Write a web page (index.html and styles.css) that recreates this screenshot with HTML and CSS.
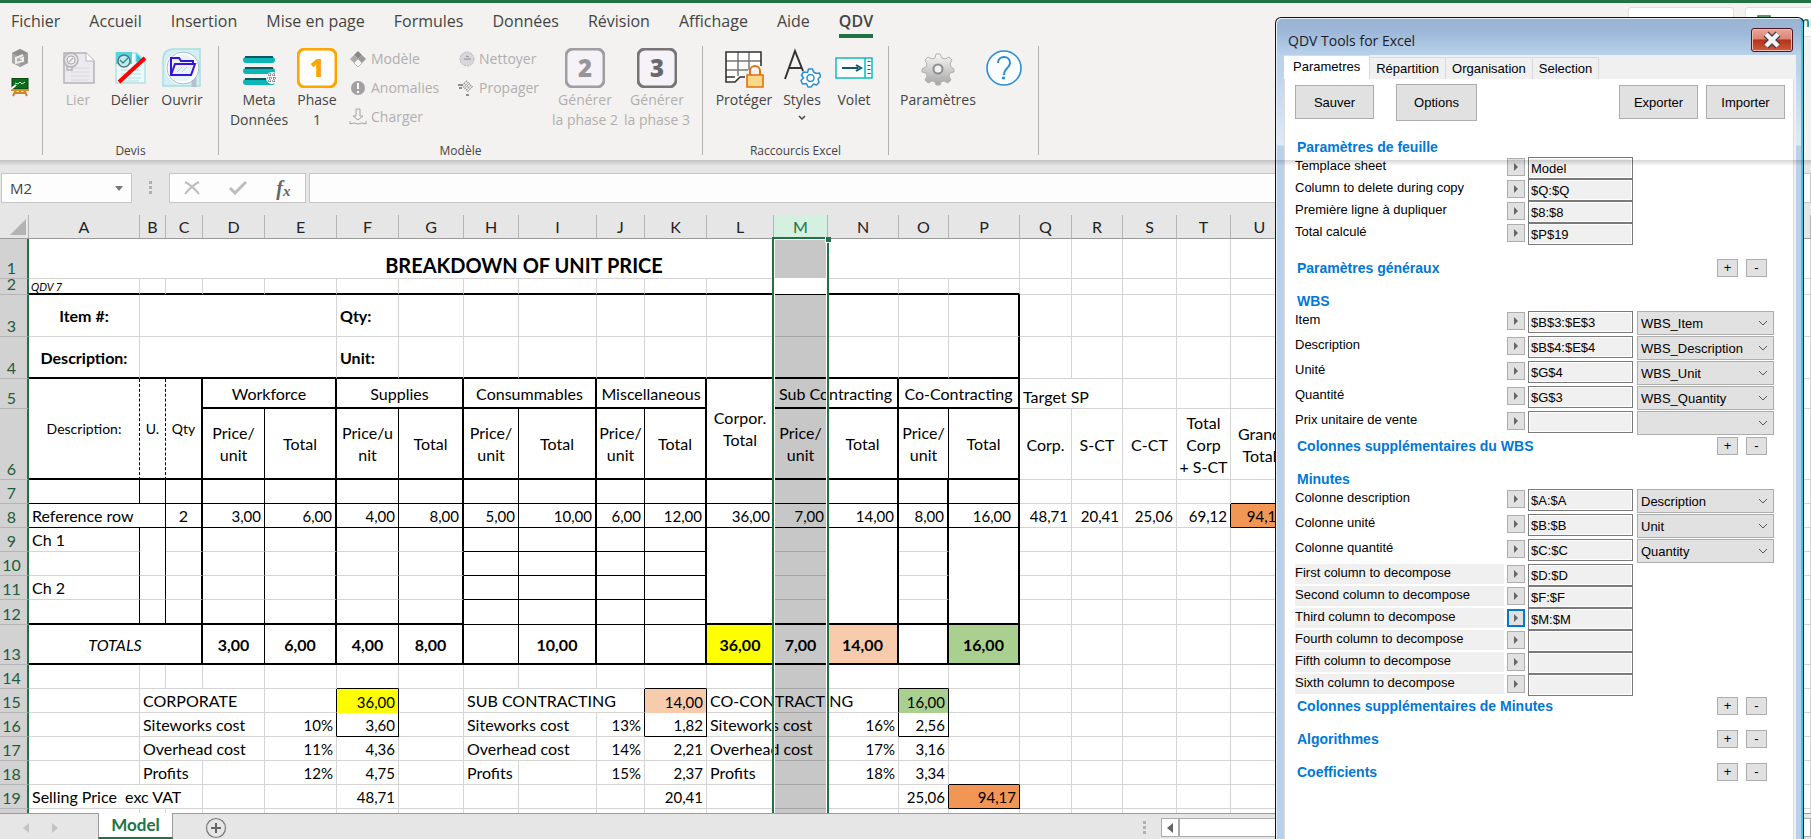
FILE: index.html
```html
<!DOCTYPE html>
<html lang="fr">
<head>
<meta charset="utf-8">
<title>QDV - Model</title>
<link rel="stylesheet" href="styles.css">
</head>
<body>
<header class="ribbon">
  <nav class="tabs">
    <a href="#">Fichier</a>
    <a href="#">Accueil</a>
    <a href="#">Insertion</a>
    <a href="#">Mise en page</a>
    <a href="#">Formules</a>
    <a href="#">Données</a>
    <a href="#">Révision</a>
    <a href="#">Affichage</a>
    <a href="#">Aide</a>
    <a href="#" class="current">QDV</a>
    <div class="share">
      <button class="share-btn"><svg width="14" height="14" viewBox="0 0 14 14"><path d="M2 12V7h6M8 3l4 4-4 4" fill="none" stroke="#217346" stroke-width="1.5"/></svg>Partager</button>
      <button class="share-btn"><svg width="14" height="14" viewBox="0 0 14 14"><path d="M1 1h12v9H6l-3 3v-3H1z" fill="none" stroke="#217346" stroke-width="1.5"/></svg>Commentaires</button>
    </div>
  </nav>
  <div class="groups">
    <section class="group quick">
      <button class="mini" aria-label="Objet"><svg width="18" height="18" viewBox="0 0 18 18"><path d="M9 0l8 4v10l-8 4-8-4V4z" fill="#a9a9a9"/><path d="M9 0l8 4-8 4-8-4z" fill="#8f8f8f"/><path d="M9 8l8-4v10l-8 4z" fill="#9a9a9a"/><path d="M12 6l-7 3v5l7-2V9l-3 1" fill="none" stroke="#eee" stroke-width="2"/></svg></button>
      <button class="mini" aria-label="Tableau"><svg width="18" height="19" viewBox="0 0 18 19"><path d="M5 12l-3 6M13 12l3 6M9 12v4M4 15h10" stroke="#d2822a" stroke-width="2"/><path d="M1 0h16v11H1z" fill="#0b6b1c" stroke="#06390f"/><path d="M4 5l3 1 2-2 2 2 3-2" stroke="#cfe8cf" fill="none"/><path d="M0 12h18" stroke="#e08a25" stroke-width="2"/><path d="M0 11l5-4" stroke="#fff" stroke-width="2"/></svg></button>
    </section>
    <section class="group devis">
      <div class="tools">
        <button class="tool off"><svg width="36" height="40" viewBox="0 0 36 40"><path d="M4 5h22l8 8v22H4z" fill="#eceaee" stroke="#b5b3b8" stroke-width="1.5"/><path d="M26 5v8h8" fill="#fff" stroke="#b5b3b8"/><path d="M11 20h18M11 24h18M11 28h18M11 32h16" stroke="#d8d6dc"/><circle cx="11" cy="12" r="7" fill="#e4e2e6" stroke="#b5b3b8" stroke-width="1.5"/><circle cx="11" cy="12" r="4" fill="#f5f4f6" stroke="#aaa8ac"/><path d="M9 14l4-4M7 18v4h5v-4" fill="none" stroke="#b5b3b8" stroke-width="1.5"/></svg><span>Lier</span></button>
        <button class="tool"><svg width="36" height="40" viewBox="0 0 36 40"><path d="M4 5h21l8 8v22H4z" fill="#e9fbfc" stroke="#b6dfe3" stroke-width="1.5"/><path d="M4 4h16v12H4z" fill="#59d3dc"/><path d="M24 5v9h9" fill="#35c9d8" stroke="#7fdce4"/><path d="M9 22h20M9 26h20M9 30h20M9 33h18" stroke="#b5dfe4"/><circle cx="12" cy="13" r="6" fill="#bfeef2" stroke="#54767c" stroke-width="1.5"/><path d="M8 12l3 3 5-5" fill="none" stroke="#3b8791" stroke-width="1.5"/><path d="M7 34L33 10" stroke="#f00" stroke-width="4"/></svg><span>Délier</span></button>
        <button class="tool"><svg width="40" height="40" viewBox="0 0 40 40"><path d="M1 12Q1 1 12 1h26v37H1z" fill="#d3eff1" stroke="#a9dde0" stroke-width="1.5"/><path d="M32 28v11" stroke="#b3c2cc" stroke-width="5"/><circle cx="20" cy="20" r="15" fill="#e6f4f7" stroke="#fff" stroke-width="3"/><circle cx="21" cy="20" r="16" fill="none" stroke="#a3bcc6"/><path d="M9 27V10h8l2 3h12v4M9 27l4-11h20l-4 11z" fill="none" stroke="#3a12e0" stroke-width="2"/><path d="M15 24l5-5M20 24l5-5" stroke="#b9cad4"/></svg><span>Ouvrir</span></button>
      </div>
      <h2>Devis</h2>
    </section>
    <section class="group modele">
      <div class="tools">
        <button class="tool meta"><svg width="36" height="40" viewBox="0 0 36 40"><g stroke-linecap="round" stroke-width="6" stroke="#0cb5b9"><path d="M5 12h26M5 23h26M5 34h26"/></g><path d="M4 9h28M4 20h28M4 31h28" stroke="#0b5a5c" stroke-width="2"/><circle cx="31" cy="30" r="6" fill="#fff"/><path d="M27 27h8M26 30h10M27 33h8M29 25v10M33 25v10" stroke="#444" stroke-dasharray="1 1"/></svg><span>Meta<br>Données</span></button>
        <button class="tool phase"><svg width="40" height="40" viewBox="0 0 40 40"><rect x="1" y="1" width="38" height="38" rx="7" fill="#fdfdfd" stroke="#ffa500" stroke-width="3"/><text x="20" y="29" class="num" fill="#ffa500">1</text></svg><span>Phase<br>1</span></button>
        <div class="small-tools first">
          <button><svg width="18" height="18" viewBox="0 0 18 18"><path d="M9 1l4 4-4 4-4-4z" fill="#888"/><path d="M5 5l4 4-4 4-4-4z" fill="#aaa"/><path d="M13 5l4 4-4 4-4-4z" fill="#999"/><path d="M9 9l4 4-4 4-4-4z" fill="#fafafa" stroke="#bbb"/></svg>Modèle</button>
          <button><svg width="18" height="18" viewBox="0 0 18 18"><circle cx="9" cy="9" r="7" fill="#a2a0a2"/><path d="M9 4v6M9 12v2" stroke="#fff" stroke-width="2"/></svg>Anomalies</button>
          <button><svg width="18" height="18" viewBox="0 0 18 18"><path d="M7 1h4v7h3l-5 4-5-4h3zM1 13v3l4-1 4 1 4-1 4 1v-3" fill="none" stroke="#a6a4a6"/></svg>Charger</button>
        </div>
        <div class="small-tools second">
          <button><svg width="18" height="18" viewBox="0 0 18 18"><circle cx="10" cy="9" r="7" fill="#d9d5dc" stroke="#b9b5bc" stroke-dasharray="2 1"/><path d="M7 9h7M9 6l3 1" stroke="#8f8c92"/></svg>Nettoyer</button>
          <button><svg width="18" height="18" viewBox="0 0 18 18"><g fill="none" stroke="#8f8d8f" stroke-width="2" stroke-dasharray="1 1"><path d="M9 2l7 7M7 4l7 7M5 6l7 7"/></g><path d="M1 6h5M2 9h3M9 16h3" stroke="#8f8d8f" stroke-width="2"/></svg>Propager</button>
        </div>
        <button class="tool gen off"><svg width="40" height="40" viewBox="0 0 40 40"><rect x="1" y="1" width="38" height="38" rx="7" fill="#f5f2f8" stroke="#a09ea1" stroke-width="3"/><text x="20" y="29" class="num" fill="#979598">2</text></svg><span>Générer<br>la phase 2</span></button>
        <button class="tool gen off"><svg width="40" height="40" viewBox="0 0 40 40"><rect x="1" y="1" width="38" height="38" rx="7" fill="#f5f2f8" stroke="#777578" stroke-width="3"/><text x="20" y="29" class="num" fill="#6b696c">3</text></svg><span>Générer<br>la phase 3</span></button>
      </div>
      <h2>Modèle</h2>
    </section>
    <section class="group excel">
      <div class="tools">
        <button class="tool wide"><svg width="40" height="40" viewBox="0 0 40 40"><path d="M2 4h35v18H22l-8 8-4 4H2z" fill="#fff"/><path d="M2 13h35M2 22h22M14 4v24M25 4v18" stroke="#777" stroke-width="1.5"/><path d="M37 18V4H2v30h9l5-5h5M2 29h9" fill="none" stroke="#333" stroke-width="1.6"/><path d="M26 27v-4a5 5 0 0 1 10 0v4" fill="none" stroke="#e0720c" stroke-width="2"/><path d="M23 27h16v12H23z" fill="#fad88a" stroke="#e0720c" stroke-width="1.6"/></svg><span>Protéger</span></button>
        <button class="tool"><svg width="38" height="40" viewBox="0 0 38 40"><path d="M2 31L12 3l8 20M6 20h13" fill="none" stroke="#333" stroke-width="2"/><path d="M25.500 21h4l1 3 3 1.500 3-.5 1 3.500-2.500 2.500 1 3.500-2.500 2.500-3-1-2.500 3h-3l-1.500-3.500-4 .5-1.500-3.500 2.500-2.500-2-3 2-3 4 .5z" fill="#fff" stroke="#2a8dd4" stroke-width="1.500" stroke-linejoin="round"/><circle cx="27.500" cy="30" r="3.500" fill="#fff" stroke="#2a8dd4" stroke-width="1.500"/></svg><span>Styles</span><svg width="10" height="16" viewBox="0 0 10 16"><path d="M2 6l3 3 3-3" fill="none" stroke="#444" stroke-width="1.5"/></svg></button>
        <button class="tool"><svg width="38" height="40" viewBox="0 0 38 40"><path d="M1 10h36v20H1zM30 10v20" fill="#fbfdfd" stroke="#12bcbc" stroke-width="1.5"/><path d="M7 20h16M21 17l5 3-5 3" fill="none" stroke="#12586a" stroke-width="2"/><path d="M34 13v14" stroke="#12586a" stroke-width="3" stroke-dasharray="1 3"/></svg><span>Volet</span></button>
      </div>
      <h2>Raccourcis Excel</h2>
    </section>
    <section class="group last">
      <div class="tools">
        <button class="tool params"><svg width="34" height="40" viewBox="0 0 34 40"><defs><linearGradient id="steel" x2="0" y2="1"><stop stop-color="#f8f8f8"/><stop offset="1" stop-color="#a5a5a5"/></linearGradient></defs><path d="M15 6h4l2 4 3 1 4-2 3 3-2 4 1 3 3 2v3l-4 1-1 3 2 4-3 3-4-2-3 1-1 3h-4l-1-3-3-1-4 2-3-3 2-4-1-3-4-1v-3l4-2 1-3-2-4 3-3 4 2 3-1z" fill="url(#steel)" stroke="#b0b0b0"/><circle cx="17" cy="21" r="4.500" fill="#f3f2f1" stroke="#8d8d8d" stroke-width="2"/></svg><span>Paramètres</span></button>
        <button class="tool" aria-label="Aide QDV"><svg width="38" height="40" viewBox="0 0 38 40"><circle cx="19" cy="20" r="17" fill="#fafcfe" stroke="#2a8dd4" stroke-width="1.6"/><path d="M13 15c0-8 12-8 12 0 0 5-6 5-6 12" fill="none" stroke="#2a8dd4" stroke-width="2"/><path d="M17 30h3" stroke="#2a8dd4" stroke-width="2.500"/></svg></button>
      </div>
    </section>
  </div>
</header>

<div class="formula-bar">
  <label class="name-box"><input type="text" value="M2" aria-label="Zone Nom"><svg width="8" height="5" viewBox="0 0 8 5"><path d="M0 0h8L4 5z" fill="#777"/></svg></label>
  <span class="grip"></span>
  <div class="fx">
    <button aria-label="Annuler"><svg width="16" height="14" viewBox="0 0 16 14"><path d="M1 1c6 3 10 7 14 12M15 1C9 4 5 8 1 13" fill="none" stroke="#bdbdbd" stroke-width="2"/></svg></button>
    <button aria-label="Valider"><svg width="18" height="14" viewBox="0 0 18 14"><path d="M1 7l5 5L17 1" fill="none" stroke="#bdbdbd" stroke-width="3"/></svg></button>
    <button class="fn">f<sub>x</sub></button>
  </div>
  <input class="formula" type="text" aria-label="Barre de formule">
</div>

<main class="sheet">
<table>
<colgroup><col class="w29"><col class="w111"><col class="w26"><col class="w37"><col class="w62"><col class="w72"><col class="w62"><col class="w65"><col class="w55"><col class="w78"><col class="w48"><col class="w62"><col class="w67"><col class="w54"><col class="w71"><col class="w50"><col class="w71"><col class="w52"><col class="w51"><col class="w54"><col class="w54"><col class="w58"><col></colgroup>
<thead>
<tr><th class="corner"><svg width="16" height="16" viewBox="0 0 16 16"><path d="M16 0v16H0z" fill="#b4b4b4"/></svg></th><th>A</th><th>B</th><th>C</th><th>D</th><th>E</th><th>F</th><th>G</th><th>H</th><th>I</th><th>J</th><th>K</th><th>L</th><th class="picked">M<div class="selection"><div class="shade above"></div><div class="active"></div><div class="shade below"></div><b class="handle"></b></div></th><th>N</th><th>O</th><th>P</th><th>Q</th><th>R</th><th>S</th><th>T</th><th>U</th><th></th></tr>
</thead>
<tbody>
<tr class="h40"><th>1</th><td colspan="16" class="title">BREAKDOWN OF UNIT PRICE</td><td></td><td></td><td></td><td></td><td></td><td></td></tr>
<tr class="h16"><th><span>2</span></th><td class="B2 note">QDV 7</td><td class="B2"></td><td class="B2"></td><td class="B2"></td><td class="B2"></td><td class="B2"></td><td class="B2"></td><td class="B2"></td><td class="B2"></td><td class="B2"></td><td class="B2"></td><td class="B2"></td><td class="B2"></td><td class="B2"></td><td class="B2"></td><td class="B2"></td><td></td><td></td><td></td><td></td><td></td><td></td></tr>
<tr class="h42"><th>3</th><td class="c b">Item #:</td><td colspan="4"></td><td class="b">Qty:</td><td></td><td></td><td></td><td></td><td></td><td></td><td></td><td></td><td></td><td class="R2"></td><td></td><td></td><td></td><td></td><td></td><td></td></tr>
<tr class="h42"><th>4</th><td class="c b B2">Description:</td><td colspan="4" class="B2"></td><td class="b B2">Unit:</td><td class="B2"></td><td class="B2"></td><td class="B2"></td><td class="B2"></td><td class="B2"></td><td class="B2"></td><td class="B2"></td><td class="B2"></td><td class="B2"></td><td class="B2 R2"></td><td></td><td></td><td></td><td></td><td></td><td></td></tr>
<tr class="h30"><th>5</th><td rowspan="2" class="c s RD B2">Description:</td><td rowspan="2" class="c s RD B2">U.</td><td rowspan="2" class="c s R2 B2">Qty</td><td colspan="2" class="c R2 B2">Workforce</td><td colspan="2" class="c R2 B2">Supplies</td><td colspan="2" class="c R2 B2">Consummables</td><td colspan="2" class="c R2 B2">Miscellaneous</td><td rowspan="2" class="c B2">Corpor.<br>Total</td><td colspan="2" class="c R2 B2">Sub Contracting</td><td colspan="2" class="c R2 B2">Co-Contracting</td><td colspan="2" class="low">Target SP</td><td></td><td></td><td></td><td></td></tr>
<tr class="h71"><th>6</th><td class="c R1 B2">Price/<br>unit</td><td class="c R2 B2">Total</td><td class="c R1 B2">Price/u<br>nit</td><td class="c R2 B2">Total</td><td class="c R1 B2">Price/<br>unit</td><td class="c R2 B2">Total</td><td class="c R1 B2">Price/<br>unit</td><td class="c R2 B2">Total</td><td class="c B2">Price/<br>unit</td><td class="c R2 B2">Total</td><td class="c R1 B2">Price/<br>unit</td><td class="c R2 B2">Total</td><td class="c">Corp.</td><td class="c">S-CT</td><td class="c">C-CT</td><td class="c">Total<br>Corp<br>+ S-CT</td><td class="c">Grand<br>Total</td><td></td></tr>
<tr class="h24"><th>7</th><td class="R1 B1"></td><td class="R1 B1"></td><td class="R2 B1"></td><td class="R1 B1"></td><td class="R2 B1"></td><td class="R1 B1"></td><td class="R2 B1"></td><td class="R1 B1"></td><td class="R2 B1"></td><td class="R1 B1"></td><td class="R2 B1"></td><td class="B1"></td><td class="B1"></td><td class="R2 B1"></td><td class="R2 B1"></td><td class="R2 B1"></td><td></td><td></td><td></td><td></td><td class="B1"></td><td></td></tr>
<tr class="h24"><th>8</th><td colspan="2" class="R1 B1">Reference row</td><td class="c R2 B1">2</td><td class="r R1 B1">3,00</td><td class="r R2 B1">6,00</td><td class="r R1 B1">4,00</td><td class="r R2 B1">8,00</td><td class="r R1 B1">5,00</td><td class="r R2 B1">10,00</td><td class="r R1 B1">6,00</td><td class="r R2 B1">12,00</td><td class="r B1">36,00</td><td class="r B1">7,00</td><td class="r R2 B1">14,00</td><td class="r R2 B1">8,00</td><td class="r indent R2 B1">16,00</td><td class="r">48,71</td><td class="r">20,41</td><td class="r">25,06</td><td class="r R1">69,12</td><td class="r R1 B1 orange">94,17</td><td></td></tr>
<tr class="h24"><th>9</th><td class="R1">Ch 1</td><td class="R1 B0"></td><td class="R2"></td><td class="R1"></td><td class="R2"></td><td class="R1"></td><td class="R2"></td><td class="R1 B1"></td><td class="R2 B1"></td><td class="R1 B1"></td><td class="R2 B1"></td><td rowspan="4" class="B2"></td><td></td><td rowspan="4" class="R2 B2"></td><td class="R2"></td><td rowspan="4" class="R2 B2"></td><td></td><td></td><td></td><td></td><td></td><td></td></tr>
<tr class="h24"><th>10</th><td class="R1"></td><td class="R1"></td><td class="R2"></td><td class="R1"></td><td class="R2"></td><td class="R1"></td><td class="R2"></td><td class="R1 B1"></td><td class="R2 B1"></td><td class="R1 B1"></td><td class="R2 B1"></td><td></td><td class="R2"></td><td></td><td></td><td></td><td></td><td></td><td></td></tr>
<tr class="h24"><th>11</th><td class="R1">Ch 2</td><td class="R1"></td><td class="R2"></td><td class="R1"></td><td class="R2"></td><td class="R1"></td><td class="R2"></td><td class="R1 B1"></td><td class="R2 B1"></td><td class="R1 B1"></td><td class="R2 B1"></td><td></td><td class="R2"></td><td></td><td></td><td></td><td></td><td></td><td></td></tr>
<tr class="h25"><th>12</th><td class="R1 B2"></td><td class="R1 B2"></td><td class="R2 B2"></td><td class="R1 B2"></td><td class="R2 B2"></td><td class="R1 B2"></td><td class="R2 B2"></td><td class="R1 B1"></td><td class="R2 B1"></td><td class="R1 B1"></td><td class="R2 B1"></td><td class="B2"></td><td class="R2 B2"></td><td></td><td></td><td></td><td></td><td></td><td></td></tr>
<tr class="h40"><th>13</th><td colspan="3" class="c i R2 B2">TOTALS</td><td class="c b R1 B2">3,00</td><td class="c b R2 B2">6,00</td><td class="c b R1 B2">4,00</td><td class="c b R2 B2">8,00</td><td class="R1 B2"></td><td class="c b R2 B2">10,00</td><td class="R1 B2"></td><td class="R2 B2"></td><td class="c b B2 yellow">36,00</td><td class="c b B2">7,00</td><td class="c b R2 B2 peach">14,00</td><td class="R2 B2"></td><td class="c b R2 B2 green">16,00</td><td></td><td></td><td></td><td></td><td></td><td></td></tr>
<tr class="h24"><th>14</th><td></td><td></td><td></td><td></td><td></td><td class="B1"></td><td></td><td></td><td></td><td></td><td class="B1"></td><td></td><td></td><td></td><td class="B1"></td><td></td><td></td><td></td><td></td><td></td><td></td><td></td></tr>
<tr class="h24"><th>15</th><td></td><td colspan="3">CORPORATE</td><td class="R1"></td><td class="r R1 B0 yellow">36,00</td><td></td><td colspan="3" class="R1">SUB CONTRACTING</td><td class="r R1 B0 peach">14,00</td><td colspan="3" class="R1">CO-CONTRACTING</td><td class="r R1 B0 green">16,00</td><td></td><td></td><td></td><td></td><td></td><td></td><td></td></tr>
<tr class="h24"><th>16</th><td></td><td colspan="3">Siteworks cost</td><td class="r R1">10%</td><td class="r R1 B1">3,60</td><td></td><td colspan="2">Siteworks cost</td><td class="r R1">13%</td><td class="r R1 B1">1,82</td><td colspan="2">Siteworks cost</td><td class="r R1">16%</td><td class="r R1 B1">2,56</td><td></td><td></td><td></td><td></td><td></td><td></td><td></td></tr>
<tr class="h24"><th>17</th><td></td><td colspan="3">Overhead cost</td><td class="r">11%</td><td class="r">4,36</td><td></td><td colspan="2">Overhead cost</td><td class="r">14%</td><td class="r">2,21</td><td colspan="2">Overhead cost</td><td class="r">17%</td><td class="r">3,16</td><td></td><td></td><td></td><td></td><td></td><td></td><td></td></tr>
<tr class="h24"><th>18</th><td></td><td colspan="2">Profits</td><td></td><td class="r">12%</td><td class="r">4,75</td><td></td><td>Profits</td><td></td><td class="r">15%</td><td class="r">2,37</td><td>Profits</td><td></td><td class="r">18%</td><td class="r">3,34</td><td class="B1"></td><td></td><td></td><td></td><td></td><td></td><td></td></tr>
<tr class="h24"><th>19</th><td colspan="3">Selling Price&nbsp; exc VAT</td><td></td><td></td><td class="r">48,71</td><td></td><td></td><td></td><td></td><td class="r">20,41</td><td></td><td></td><td></td><td class="r R1">25,06</td><td class="r R1 B1 orange">94,17</td><td></td><td></td><td></td><td></td><td></td><td></td></tr>
<tr class="h24"><th></th><td></td><td></td><td></td><td></td><td></td><td></td><td></td><td></td><td></td><td></td><td></td><td></td><td></td><td></td><td></td><td></td><td></td><td></td><td></td><td></td><td></td><td></td></tr>
</tbody>
</table>
</main>

<footer class="sheet-tabs">
  <div class="nav"><svg width="6" height="10" viewBox="0 0 6 10"><path d="M6 0v10L0 5z" fill="#c3c3c3"/></svg><svg width="6" height="10" viewBox="0 0 6 10"><path d="M0 0v10l6-5z" fill="#c3c3c3"/></svg></div>
  <button class="sheet-tab">Model</button>
  <button class="add" aria-label="Nouvelle feuille"><svg width="22" height="22" viewBox="0 0 22 22"><circle cx="11" cy="11" r="9.500" fill="none" stroke="#777" stroke-width="1.2"/><path d="M11 6v10M6 11h10" stroke="#666" stroke-width="2"/></svg></button>
  <span class="grip"></span>
  <div class="scroll"><button aria-label="Défiler"><svg width="6" height="10" viewBox="0 0 6 10"><path d="M6 0v10L0 5z" fill="#666"/></svg></button><div class="track"></div></div>
</footer>

<aside class="dialog">
  <div class="titlebar"><h1>QDV Tools for Excel</h1><button class="close" aria-label="Fermer"><svg width="20" height="18" viewBox="0 0 20 18"><path d="M4 3l12 12M16 3L4 15" stroke="#4a3a44" stroke-width="7"/><path d="M4 3l12 12M16 3L4 15" stroke="#f4f4f4" stroke-width="4.500"/></svg></button></div>
  <div class="body">
    <div class="dlg-tabs"><button class="on">Parametres</button><button>Répartition</button><button>Organisation</button><button>Selection</button></div>
    <div class="panel">
      <div class="actions"><button>Sauver</button><button class="big">Options</button><button class="push">Exporter</button><button>Importer</button></div>
      <div class="head"><h3>Paramètres de feuille</h3></div>
      <div class="row"><label for="p1">Templace sheet</label><button class="pick" aria-label="Choisir"></button><input id="p1" value="Model"></div>
      <div class="row"><label for="p2">Column to delete during copy</label><button class="pick" aria-label="Choisir"></button><input id="p2" value="$Q:$Q"></div>
      <div class="row"><label for="p3">Première ligne à dupliquer</label><button class="pick" aria-label="Choisir"></button><input id="p3" value="$8:$8"></div>
      <div class="row"><label for="p4">Total calculé</label><button class="pick" aria-label="Choisir"></button><input id="p4" value="$P$19"></div>
      <div class="head"><h3>Paramètres généraux</h3><button>+</button><button>-</button></div>
      <div class="head"><h3>WBS</h3></div>
      <div class="row tall"><label for="w1">Item</label><button class="pick" aria-label="Choisir"></button><input id="w1" value="$B$3:$E$3"><select aria-label="Champ Item"><option>WBS_Item</option></select></div>
      <div class="row tall"><label for="w2">Description</label><button class="pick" aria-label="Choisir"></button><input id="w2" value="$B$4:$E$4"><select aria-label="Champ Description"><option>WBS_Description</option></select></div>
      <div class="row tall"><label for="w3">Unité</label><button class="pick" aria-label="Choisir"></button><input id="w3" value="$G$4"><select aria-label="Champ Unité"><option>WBS_Unit</option></select></div>
      <div class="row tall"><label for="w4">Quantité</label><button class="pick" aria-label="Choisir"></button><input id="w4" value="$G$3"><select aria-label="Champ Quantité"><option>WBS_Quantity</option></select></div>
      <div class="row tall"><label for="w5">Prix unitaire de vente</label><button class="pick" aria-label="Choisir"></button><input id="w5" value=""><select aria-label="Champ Prix"><option></option></select></div>
      <div class="head tight"><h3>Colonnes supplémentaires du WBS</h3><button>+</button><button>-</button></div>
      <div class="head"><h3>Minutes</h3></div>
      <div class="row tall"><label for="m1">Colonne description</label><button class="pick" aria-label="Choisir"></button><input id="m1" value="$A:$A"><select aria-label="Champ description"><option>Description</option></select></div>
      <div class="row tall"><label for="m2">Colonne unité</label><button class="pick" aria-label="Choisir"></button><input id="m2" value="$B:$B"><select aria-label="Champ unité"><option>Unit</option></select></div>
      <div class="row tall"><label for="m3">Colonne quantité</label><button class="pick" aria-label="Choisir"></button><input id="m3" value="$C:$C"><select aria-label="Champ quantité"><option>Quantity</option></select></div>
      <div class="row fill"><label for="d1">First column to decompose</label><button class="pick" aria-label="Choisir"></button><input id="d1" value="$D:$D"></div>
      <div class="row fill"><label for="d2">Second column to decompose</label><button class="pick" aria-label="Choisir"></button><input id="d2" value="$F:$F"></div>
      <div class="row fill"><label for="d3">Third column to decompose</label><button class="pick focus" aria-label="Choisir"></button><input id="d3" value="$M:$M"></div>
      <div class="row fill"><label for="d4">Fourth column to decompose</label><button class="pick" aria-label="Choisir"></button><input id="d4" value=""></div>
      <div class="row fill"><label for="d5">Fifth column to decompose</label><button class="pick" aria-label="Choisir"></button><input id="d5" value=""></div>
      <div class="row fill"><label for="d6">Sixth column to decompose</label><button class="pick" aria-label="Choisir"></button><input id="d6" value=""></div>
      <div class="head tight"><h3>Colonnes supplémentaires de Minutes</h3><button>+</button><button>-</button></div>
      <div class="head"><h3>Algorithmes</h3><button>+</button><button>-</button></div>
      <div class="head"><h3>Coefficients</h3><button>+</button><button>-</button></div>
    </div>
  </div>
</aside>
</body>
</html>
```
FILE: styles.css
```css
* { box-sizing: border-box; }
body {
  margin: 0;
  height: 100vh;
  display: flex;
  flex-direction: column;
  overflow: hidden;
  position: relative;
  background: #e6e6e6;
  font: 14px/20px "Open Sans", "Noto Sans", sans-serif;
  color: #444;
}
button, input, select { font: inherit; color: inherit; margin: 0; padding: 0; border: 0; background: none; border-radius: 0; }
h1, h2, h3 { margin: 0; font-weight: 400; }
svg { flex: none; display: block; }

/* Ribbon */
.ribbon { flex: none; background: #f3f2f1; border-top: 3px solid #217346; position: relative; }
.ribbon::after {
  content: "";
  position: absolute;
  z-index: 3;
  left: 0;
  right: 0;
  top: 100%;
  height: 6px;
  background: linear-gradient(rgba(0,0,0,.16), rgba(0,0,0,0));
  pointer-events: none;
}
.tabs { display: flex; gap: 29px; height: 38px; padding-left: 11px; overflow: hidden; }
.tabs a { color: #444; text-decoration: none; font-size: 16px; line-height: 37px; height: 35px; white-space: nowrap; }
.tabs .current { font-weight: 600; border-bottom: 4px solid #217346; }
.share { margin: 4px -40px 0 auto; display: flex; gap: 11px; }
.share-btn { display: flex; align-items: center; gap: 8px; height: 30px; width: 106px; padding: 0 11px; background: #fff; border: 1px solid #e1dfdd; border-radius: 3px; color: #217346; font-weight: 600; }
.groups { display: flex; height: 119px; padding: 5px 0; }
.group { border-right: 1px solid #b3b1af; display: flex; flex-direction: column; justify-content: space-between; height: 109px; }
.group h2 { font-size: 12px; line-height: 14px; text-align: center; margin-bottom: -3px; }
.quick { width: 43px; padding: 3px 0 0 11px; justify-content: flex-start; gap: 11px; }
.mini { width: 18px; height: 18px; }
.tools { display: flex; align-items: flex-start; padding-left: 9px; }
.tool { display: flex; flex-direction: column; align-items: center; width: 52px; padding-top: 2px; white-space: nowrap; line-height: 20px; }
.tool > span { margin-top: 2px; }
.off, .small-tools { color: #b1afad; }
.num { font: 800 24px "Open Sans", sans-serif; text-anchor: middle; }
.devis { width: 176px; }
.modele { width: 484px; }
.meta { width: 62px; }
.phase { width: 54px; }
.small-tools { width: 108px; display: flex; flex-direction: column; gap: 9px; padding: 3px 0 0 5px; }
.small-tools button { display: flex; align-items: center; gap: 4px; height: 20px; }
.second { width: 97px; }
.gen { width: 72px; }
.excel { width: 186px; }
.wide { width: 64px; }
.last { width: 150px; }
.params { width: 80px; }

/* Formula bar */
.formula-bar { flex: none; display: flex; height: 55px; padding: 13px 0 12px 1px; color: #444; }
.name-box { width: 131px; display: flex; align-items: center; padding: 0 8px; background: #fdfdfd; border: 1px solid #c6c6c6; }
.name-box input { flex: 1; min-width: 0; font-size: 15px; }
.grip { width: 3px; height: 14px; align-self: center; background: repeating-linear-gradient(#b0b0b0 0 3px, transparent 3px 5px); }
.formula-bar .grip { margin: 0 17px; }
.fx { width: 137px; display: flex; align-items: center; justify-content: space-around; background: #fdfdfd; border: 1px solid #c6c6c6; margin-right: 3px; }
.fn { font: italic 700 20px/28px "Liberation Serif", serif; color: #666; }
.fn sub { font-size: 15px; line-height: 0; vertical-align: -1px; }
.formula { flex: 1; background: #fdfdfd; border: 1px solid #c6c6c6; }

/* Spreadsheet */
.sheet { flex: 1; min-height: 0; overflow: hidden; font: 16px/23px Lato, "Open Sans", sans-serif; color: #000; }
table { width: 100%; table-layout: fixed; border-collapse: separate; border-spacing: 0; background: #fff; }
.w26 { width: 26px; } .w29 { width: 29px; } .w37 { width: 37px; } .w48 { width: 48px; } .w50 { width: 50px; }
.w51 { width: 51px; } .w52 { width: 52px; } .w54 { width: 54px; } .w55 { width: 55px; } .w58 { width: 58px; }
.w62 { width: 62px; } .w65 { width: 65px; } .w67 { width: 67px; } .w71 { width: 71px; } .w72 { width: 72px; }
.w78 { width: 78px; } .w111 { width: 111px; }
.h16 { height: 16px; } .h24 { height: 24px; } .h25 { height: 25px; } .h30 { height: 30px; }
.h40 { height: 40px; } .h42 { height: 42px; } .h71 { height: 71px; }
th { font-weight: 400; padding: 0; }
thead th { height: 24px; background: #e6e6e6; border-right: 1px solid #b5b5b5; border-bottom: 1px solid #9b9b9b; color: #222; }
thead .corner svg { margin: 0 2px 0 auto; }
tbody th { background: #d2d2d2; color: #1e5c3b; border-right: 2px solid #217346; border-bottom: 1px solid #b5b5b5; vertical-align: bottom; line-height: 21px; padding-right: 4px; }
.h16 th span { display: flex; align-items: flex-end; justify-content: center; height: 15px; overflow: hidden; }
td { padding: 1px 3px 0; border: 0 solid #d4d4d4; border-width: 0 1px 1px 0; white-space: nowrap; line-height: 22px; }
.title { text-align: center; font-size: 20px; font-weight: 700; padding-top: 12px; }
td.note { font-size: 11px; line-height: 13px; font-style: italic; padding: 0 2px; }
.h16 td { padding-top: 0; }
.c { text-align: center; padding: 1px 0 0; }
.r { text-align: right; font-size: 15px; }
.indent { padding-right: 7px; }
.b { font-weight: 700; }
.i { font-style: italic; }
.s { font-size: 14px; }
.low { vertical-align: bottom; }
.R1 { border-right: 1px solid #000; }
.R2 { border-right: 2px solid #000; }
.RD { border-right: 1px dashed #000; }
.B0 { border-bottom-width: 0; }
.B1 { border-bottom: 1px solid #000; }
.B2 { border-bottom: 2px solid #000; }
.yellow { background: #ff0; }
.peach { background: #f8cbad; }
.green { background: #a9d08e; }
.orange { background: #f19655; }
.picked { background: #d3f0e0; color: #217346; position: relative; }
.selection { position: absolute; z-index: 1; left: -2px; right: -2px; top: 22px; height: 100vh; border: 2px solid #217346; box-shadow: inset 0 0 0 1px #fff; display: flex; flex-direction: column; padding: 1px; }
.shade { background: rgba(0,0,0,.22); }
.above { flex: 0 0 38px; }
.active { flex: 0 0 16px; background: #fff; }
.below { flex: 1; }
.handle { position: absolute; right: -4px; top: -2px; width: 6px; height: 6px; background: #217346; border: 1px solid #fff; border-width: 0 0 1px 1px; }

/* Sheet tabs */
.sheet-tabs { flex: none; display: flex; height: 26px; border-top: 1px solid #9b9b9b; background: #e6e6e6; }
.nav { width: 98px; display: flex; gap: 23px; align-items: center; padding: 2px 0 0 23px; }
.sheet-tab { width: 75px; margin-top: -1px; background: #fff; border: solid #9b9b9b; border-width: 0 1px; border-bottom: 2px solid #217346; color: #217346; font: 700 17px/22px Lato, sans-serif; }
.add { margin-left: 32px; padding-top: 3px; }
.sheet-tabs .grip { margin: 3px 15px 0 auto; }
.scroll { width: 650px; display: flex; margin-top: 4px; height: 19px; border: 1px solid #ababab; background: #fff; }
.scroll button { width: 18px; border-right: 2px solid #ababab; display: flex; align-items: center; justify-content: center; }

/* Tool window */
.dialog {
  position: absolute;
  z-index: 2;
  top: 17px;
  right: 7px;
  bottom: 0;
  width: 529px;
  border: 1px solid #111;
  border-bottom: 0;
  border-radius: 6px 6px 0 0;
  box-shadow: inset 1px 1px #e8f1fa, inset -2px 0 #3cc8ee;
  padding: 1px 7px 0 8px;
  background: linear-gradient(#9ab3d1, #9db8d8 14px, #b9d1ea 37px, #bdd3eb 50px, #e0eaf6 127px, #b9d1ea 128px);
  font: 13px/17px "Liberation Sans", Arial, sans-serif;
  color: #000;
  display: flex;
  flex-direction: column;
}
.titlebar { display: flex; height: 36px; padding: 9px 3px 0 4px; flex: none; }
.titlebar h1 { flex: 1; font: 14px/26px "Open Sans", sans-serif; color: #1b1b2b; }
.close { width: 42px; height: 24px; border: 1px solid #4d1520; border-radius: 3px; display: grid; place-items: center; background: linear-gradient(#e8a79b, #dd8372 45%, #b5331a 50%, #cd5a3c); box-shadow: inset 0 0 0 1px #f0b9ae; }
.body { flex: 1; background: #f0f0f0; display: flex; flex-direction: column; }
.dlg-tabs { display: flex; align-items: flex-end; height: 24px; }
.dlg-tabs button { height: 22px; border: 1px solid #d9d9d9; border-width: 1px 1px 0 0; padding: 0 6px; }
.dlg-tabs .on { height: 24px; background: #fff; padding: 0 9px 2px; }
.panel { flex: 1; margin-right: 2px; background: #fff; border: solid #dcdcdc; border-width: 0 1px 0 1px; padding: 4px 8px 0 10px; }
.actions { display: flex; align-items: center; gap: 8px; height: 38px; margin-bottom: 16px; }
.actions button { width: 79px; height: 34px; background: #e1e1e1; border: 1px solid #adadad; }
.actions .big { width: 81px; height: 37px; margin-left: 14px; }
.actions .push { margin-left: auto; }
.head { display: flex; align-items: center; gap: 8px; height: 20px; margin-top: 13px; padding: 0 18px 0 2px; }
.actions + .head, .head.tight { margin-top: 0; }
.head h3 { flex: 1; font-weight: 700; font-size: 14px; line-height: 20px; color: #0078d7; }
.head button { width: 21px; height: 18px; background: #e1e1e1; border: 1px solid #adadad; line-height: 14px; }
.row { display: grid; grid-template-columns: 209px 18px 105px 137px; column-gap: 3px; align-items: start; height: 22px; }
.row.tall { height: 25px; }
.row label { height: 20px; }
.row.fill label { background: #f0f0f0; }
.row input { width: 105px; height: 22px; padding: 0 2px; background: #f0f0f0; border: 1px solid #7a7a7a; box-shadow: inset 0 0 0 1px #fff; }
.row select {
  height: 24px;
  margin-left: 1px;
  width: 137px;
  padding: 0 3px;
  appearance: none;
  border: 1px solid #adadad;
  background: #e1e1e1 url("data:image/svg+xml,%3Csvg xmlns='http://www.w3.org/2000/svg' width='10' height='6'%3E%3Cpath d='M1 1l4 4 4-4' fill='none' stroke='%23555'/%3E%3C/svg%3E") no-repeat right 5px center;
}
.pick { width: 18px; height: 18px; margin-top: 1px; background: #e1e1e1; border: 1px solid #adadad; display: grid; place-items: center; }
.pick::before { content: ""; border: solid transparent; border-width: 4px 0 4px 4px; border-left-color: #666; }
.pick.focus { border: 2px solid #0078d7; }
```
